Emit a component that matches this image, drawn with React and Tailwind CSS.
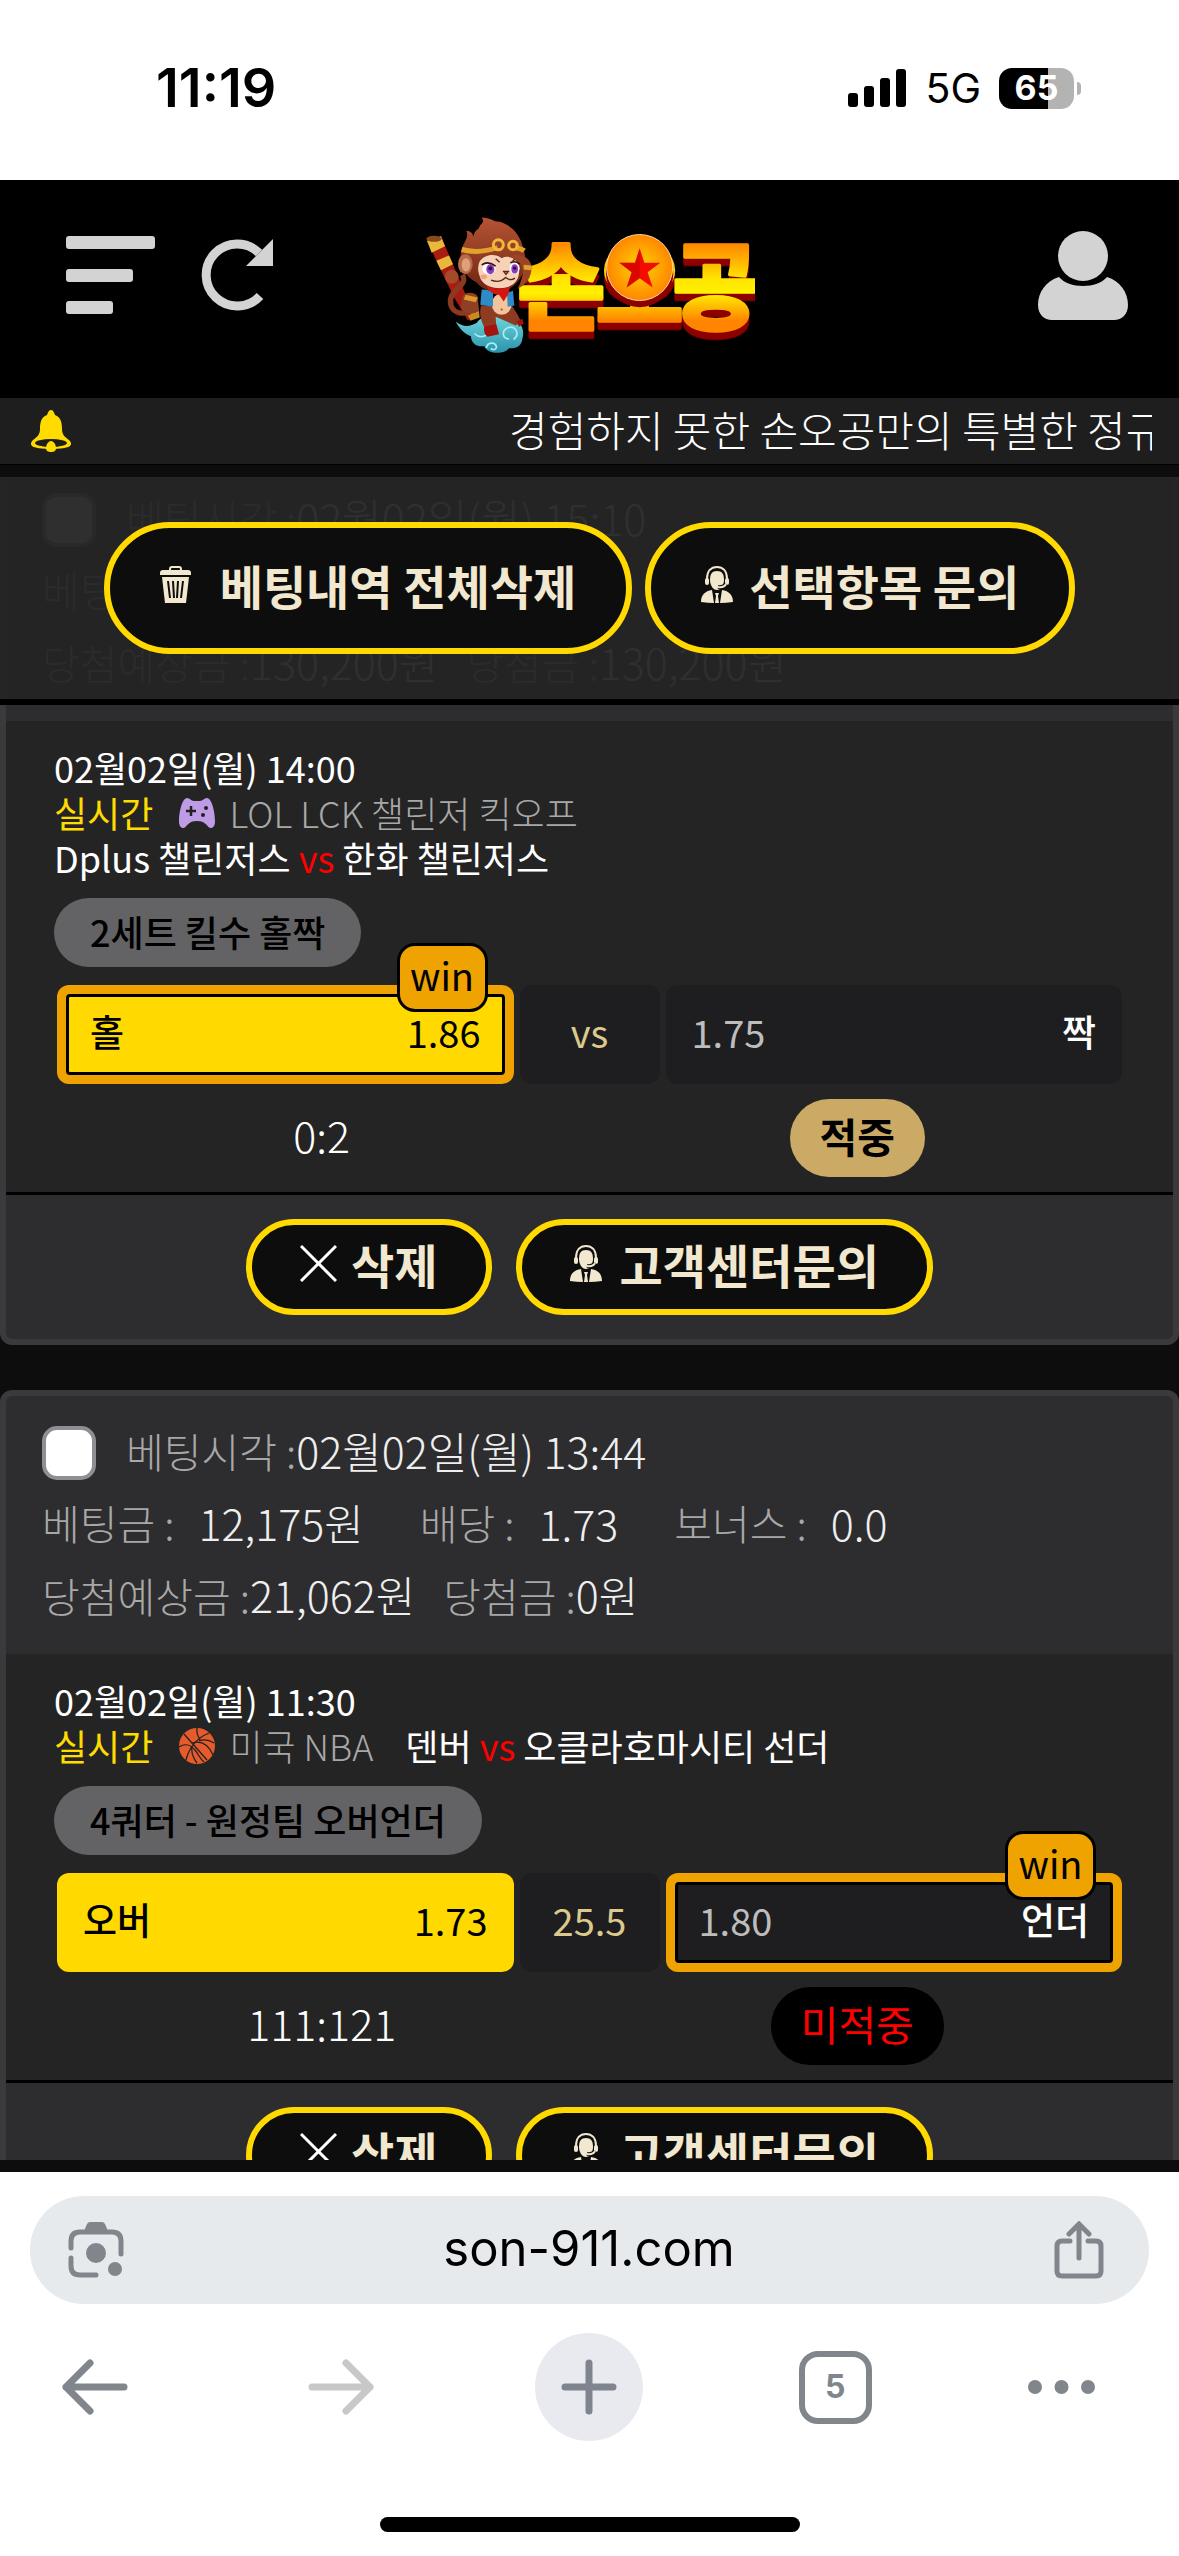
import React, { useState } from "react";

const krFont = "font-['Noto_Sans_CJK_KR','Noto_Sans_CJK_SC',sans-serif]";
const uiFont = "font-[Inter,'Liberation_Sans',sans-serif]";

const bets = [
  {
    id: "bet-1",
    time: "02월02일(월) 15:10",
    stake: "70,000원",
    odds: "1.86",
    bonus: "0.0",
    expected: "130,200원",
    payout: "130,200원",
    matchTime: "02월02일(월) 14:00",
    sport: "esports",
    league: "LOL LCK 챌린저 킥오프",
    home: "Dplus 챌린저스",
    away: "한화 챌린저스",
    teamsOnNewLine: true,
    market: "2세트 킬수 홀짝",
    left: { name: "홀", odds: "1.86" },
    middle: "vs",
    right: { name: "짝", odds: "1.75" },
    winner: "left",
    score: "0:2",
    hit: true,
  },
  {
    id: "bet-2",
    time: "02월02일(월) 13:44",
    stake: "12,175원",
    odds: "1.73",
    bonus: "0.0",
    expected: "21,062원",
    payout: "0원",
    matchTime: "02월02일(월) 11:30",
    sport: "basketball",
    league: "미국 NBA",
    home: "덴버",
    away: "오클라호마시티 선더",
    teamsOnNewLine: false,
    market: "4쿼터 - 원정팀 오버언더",
    left: { name: "오버", odds: "1.73" },
    middle: "25.5",
    right: { name: "언더", odds: "1.80" },
    winner: "right",
    score: "111:121",
    hit: false,
  },
];

/* ---------- icons ---------- */

const MenuIcon = () => (
  <svg viewBox="0 0 89 78" className="w-[89px] h-[78px]" fill="#d3d3d3">
    <rect width="89" height="13" rx="3" />
    <rect y="33" width="67" height="13" rx="3" />
    <rect y="65" width="47" height="13" rx="3" />
  </svg>
);

const RefreshIcon = () => (
  <svg viewBox="0 0 72 72" className="w-[72px] h-[72px]">
    <path d="M58 14A31 31 0 1 0 59 57" fill="none" stroke="#d3d3d3" strokeWidth="9" />
    <path d="M72 0v27H45z" fill="#d3d3d3" />
  </svg>
);

const UserIcon = () => (
  <svg viewBox="0 0 90 89" className="w-[90px] h-[89px]" fill="#d3d3d3">
    <circle cx="45" cy="25" r="25" />
    <path d="M21 46c5 6 14 9 24 9s19-3 24-9c13 4 21 15 21 28 0 9-6 15-14 15H14C6 89 0 83 0 74c0-13 8-24 21-28z" />
  </svg>
);

const BellIcon = () => (
  <svg viewBox="0 0 42 42" className="w-[42px] h-[42px] shrink-0">
    <path
      d="M21 0c2 0 3 2 4 5 6 2 7 8 7 14 0 6 3 8 7 11 2 2 3 4 1 6-4 4-34 4-38 0-2-2-1-4 1-6 4-3 7-5 7-11 0-6 1-12 7-14 1-3 2-5 4-5z"
      fill="#ffdb00"
    />
    <ellipse cx="21" cy="33" rx="16" ry="4" fill="#1e1e1e" />
    <path d="M21 31c3 0 5 4 5 7s-2 4-5 4-5-1-5-4 2-7 5-7z" fill="#ffdb00" />
  </svg>
);

const TrashIcon = () => (
  <svg viewBox="0 0 31 37" className="w-[31px] h-[37px]">
    <path d="M10 6V3q0-2 2-2h7q2 0 2 2v3" fill="none" stroke="#f1e8cf" strokeWidth="2" />
    <path d="M3 4h25q3 0 3 3v2H0V7q0-3 3-3z" fill="#f1e8cf" />
    <path d="M2 11h27l-3 26H5z" fill="#f1e8cf" />
    <path d="M8 15l2 17M13 15l1 17M18 15l-1 17M23 15l-2 17" stroke="#0d0d0d" strokeWidth="2" />
  </svg>
);

const AgentIcon = () => (
  <svg viewBox="0 0 32 37" className="w-[32px] h-[37px]">
    <path d="M16 5c5 0 7 3 7 9 0 5-3 10-7 10s-7-5-7-10c0-6 2-9 7-9z" fill="#f1e8cf" />
    <path d="M6 13C6 5 10 1 16 1s10 4 10 12" fill="none" stroke="#f1e8cf" strokeWidth="2" />
    <rect x="4" y="12" width="4" height="7" rx="2" fill="#f1e8cf" />
    <rect x="24" y="12" width="4" height="7" rx="2" fill="#f1e8cf" />
    <path d="M25 18q-2 4-8 3" fill="none" stroke="#0d0d0d" strokeWidth="4" />
    <path d="M25 18q-2 4-8 3" fill="none" stroke="#f1e8cf" strokeWidth="2" />
    <path d="M11 24c-7 1-11 5-11 12q7 1 13 1zM21 24c7 1 11 5 11 12q-7 1-13 1z" fill="#f1e8cf" />
    <path d="M14 27h4l-1 3 1 7h-4l1-7z" fill="#f1e8cf" />
  </svg>
);

const CloseIcon = () => (
  <svg viewBox="0 0 37 37" className="w-[37px] h-[37px]">
    <path d="M1 1l35 35M36 1L1 36" stroke="#ffffff" strokeWidth="3" />
  </svg>
);

const SportIcon = ({ sport }) => {
  if (sport === "esports") {
    return (
      <svg viewBox="0 0 36 30" className="w-[36px] h-[30px]">
        <path
          d="M8 0c3 0 4 3 7 3h6c3 0 4-3 7-3 5 0 8 15 8 23 0 5-2 7-4 7-4 0-4-7-14-7S8 30 4 30c-2 0-4-2-4-7C0 15 3 0 8 0z"
          fill="#bf9be5"
        />
        <path d="M12 8v10M7 13h10" stroke="#222" strokeWidth="2.500" />
        <circle cx="27" cy="10" r="2" fill="#222" />
        <circle cx="24" cy="17" r="2" fill="#222" />
      </svg>
    );
  }
  return (
    <svg viewBox="0 0 36 36" className="w-[36px] h-[36px]">
      <circle cx="18" cy="18" r="18" fill="#e55b2b" />
      <g fill="none" stroke="#222222" strokeWidth="1.300">
        <path d="M5 6l23 26M30 5C18 10 10 20 7 32M18 0c-1 6 1 8 3 12M0 19c6-4 12-2 16 3s5 9 9 12M13 15c10-3 17 3 21 12M20 13c5-2 10-1 15 2M13 18c-1 7 1 12 5 17" />
      </g>
    </svg>
  );
};

const Logo = () => (
  <svg viewBox="78 50 990 416" className="w-[330px] h-[139px]">
    <defs>
      <linearGradient id="gold" x1="0" y1="0" x2="0" y2="1">
        <stop offset="0.25" stopColor="#ff8a00" />
        <stop offset="0.5" stopColor="#ffe600" />
        <stop offset="0.6" stopColor="#fff000" />
        <stop offset="0.8" stopColor="#ff8400" />
      </linearGradient>
      <radialGradient id="disc">
        <stop offset="0" stopColor="#ffd500" />
        <stop offset="1" stopColor="#ff8600" />
      </radialGradient>
      <linearGradient id="hair" x1="0" y1="0" x2="0" y2="1">
        <stop offset="0" stopColor="#b55433" />
        <stop offset="1" stopColor="#6e2413" />
      </linearGradient>
      <linearGradient id="cloud" x1="0" y1="0" x2="0" y2="1">
        <stop offset="0" stopColor="#6fd7de" />
        <stop offset="1" stopColor="#2a93ab" />
      </linearGradient>
    </defs>

    {/* wordmark with a dark red edge below */}
    <text
      x="487 722 952"
      y="366"
      fontSize="286"
      textAnchor="middle"
      strokeLinejoin="round"
      fill="url(#gold)"
      stroke="url(#gold)"
      strokeWidth="10"
      className="font-['Noto_Sans_CJK_KR',sans-serif] font-black drop-shadow-[0_22px_0_#8d0000]"
    >
      손오공
    </text>
    <circle cx="722" cy="222" r="101" fill="#8d0000" />
    <circle cx="722" cy="204" r="99" fill="url(#disc)" stroke="#ffd9a0" strokeWidth="3" />
    <path
      d="M722 146l14 44h48l-38 28 15 46-39-28-39 28 15-46-37-28h47z"
      fill="#f20d00"
    />
    <path d="M722 146v90l-39 28 15-46-37-28h47z" fill="#c40000" opacity="0.500" />

    {/* staff */}
    <path d="M84 124l42-14 76 180 34 60-30 12-42-70z" fill="#a81c12" />
    <path d="M84 124l42-14 12 30-40 20zM112 184l38-16 12 26-36 18z" fill="#eab93c" />
    <ellipse cx="105" cy="118" rx="23" ry="9" fill="#8a4a1c" />
    <path d="M206 346l34-12 2 20-28 10z" fill="#c98a22" />
    {/* tail */}
    <path d="M190 226c22 34-48 44-34 92 8 24 34 26 58 20" fill="none" stroke="#8b3a20" strokeWidth="16" />
    <circle cx="158" cy="232" r="21" fill="#a4492a" />
    {/* cloud */}
    <path
      d="M170 366c20 16 40 18 64 4 10-22 60-30 90-18 36 2 56 34 46 66-2 26-24 30-40 28-14 20-66 18-74-6-26 4-40-12-40-30-20-6-34-22-46-44z"
      fill="url(#cloud)"
    />
    <path
      d="M344 420c20-16 6-42-16-36-22 8-18 36 2 34M262 446c4-20 26-18 30-6 2 10-12 14-16 6M226 402c14 14 30 10 40 2"
      fill="none"
      stroke="#a6eef0"
      strokeWidth="5"
    />
    {/* body */}
    <path d="M246 318c-8 34 4 56 18 78l28-8-2-36 60 26 16-12c-10-22-16-30-28-48z" fill="#8d3c22" />
    <path d="M256 380l36-6 8 30-34 8c-12-8-12-20-10-32zM352 366l18-8 4 14-14 10z" fill="#a3130f" />
    <ellipse cx="308" cy="314" rx="30" ry="32" fill="#f3c49b" />
    <path d="M248 270l34 2 0 50-38-6zM324 280l18-6 4 44-20 4z" fill="#2d8bc8" />
    <path d="M190 290c10-14 40-14 46 2l4 40c-16 16-46 12-54-8z" fill="#8f3f24" />
    <path d="M200 286l36 8-6 14-36-8z" fill="#d99a2b" />
    <circle cx="308" cy="330" r="3" fill="#8d4b2c" />
    {/* head */}
    <path
      d="M186 160c4-30 26-44 16-66 16 2 18 8 22 18 0-10 4-18 16-26 2-14 20-14 8-32 26 0 38 14 50 12 34 6 66 38 74 78 14 40 10 90-40 124-40 18-80 6-100-20-40-18-52-60-46-88z"
      fill="url(#hair)"
    />
    <ellipse cx="199" cy="194" rx="22" ry="30" fill="#b96a4a" />
    <ellipse cx="201" cy="196" rx="13" ry="20" fill="#e0a07c" />
    <path
      d="M242 186c14-22 46-26 66-10 18-10 46 0 50 22 8 30-4 58-36 66-34 8-74-6-80-34-6-14-6-30 0-44z"
      fill="#f6d3b8"
    />
    <ellipse cx="270" cy="208" rx="20" ry="17" fill="#ffffff" />
    <ellipse cx="347" cy="206" rx="15" ry="17" fill="#ffffff" />
    <ellipse cx="274" cy="209" rx="12" ry="15" fill="#8a3cc4" />
    <ellipse cx="347" cy="208" rx="10" ry="14" fill="#8a3cc4" />
    <circle cx="274" cy="207" r="6" fill="#2a1038" />
    <circle cx="347" cy="206" r="5" fill="#2a1038" />
    <path d="M248 196q20-14 42 4M334 190q16-8 28 4" fill="none" stroke="#35120c" strokeWidth="5" />
    <path d="M314 216l14 0-7 9zM276 242q26 10 44-8 14 12 28 2" fill="none" stroke="#5a2517" strokeWidth="4" />
    <path d="M290 178l12 10M350 176l-10 10" stroke="#5a2517" strokeWidth="4" />
    <ellipse cx="254" cy="232" rx="10" ry="7" fill="#f2a18a" />
    {/* headband */}
    <path d="M188 150q50 14 108-6M348 144q20 4 28 10" fill="none" stroke="#e2a12c" strokeWidth="15" />
    <circle cx="298" cy="136" r="15" fill="none" stroke="#f0b93c" strokeWidth="9" />
    <circle cx="342" cy="138" r="13" fill="none" stroke="#f0b93c" strokeWidth="9" />
    {/* raised hand */}
    <path d="M336 168c20-8 52 2 60 26 6 32-10 60-40 74 12-26 22-52 10-72-8-14-22-16-30-28z" fill="#9c4426" />
    <path d="M374 196l24 2-2 14-22-2z" fill="#e2a12c" />
    {/* scarf */}
    <path d="M262 258c20 12 46 12 70 4l-2 18-16 26-14-20c-14 0-30-8-38-28z" fill="#d3170f" />
  </svg>
);

const SignalIcon = () => (
  <svg viewBox="0 0 59 38" className="w-[59px] h-[38px]">
    <rect y="24" width="10" height="14" rx="3" />
    <rect x="16" y="17" width="10" height="21" rx="3" />
    <rect x="32" y="9" width="10" height="29" rx="3" />
    <rect x="48" width="10" height="38" rx="3" />
  </svg>
);

const LensIcon = () => (
  <svg viewBox="0 0 56 56" className="w-[56px] h-[56px]" fill="none" stroke="#80868b" strokeWidth="5">
    <path d="M3 26V19q0-9 9-9h32q9 0 9 9v13M3 36v8q0 9 9 9h16" strokeLinecap="round" />
    <path d="M16 9l3-7q1-2 3-2h12q2 0 3 2l3 7z" fill="#80868b" stroke="none" />
    <circle cx="28" cy="31" r="10" fill="#80868b" stroke="none" />
    <circle cx="47" cy="47" r="7" fill="#80868b" stroke="none" />
  </svg>
);

const ShareIcon = () => (
  <svg viewBox="0 0 50 58" className="w-[50px] h-[58px]" fill="none" stroke="#80868b" strokeWidth="5" strokeLinecap="round">
    <path d="M16 20H8q-5 0-5 5v25q0 5 5 5h34q5 0 5-5V25q0-5-5-5h-8" />
    <path d="M25 37V4M15 13L25 3l10 10" />
  </svg>
);

const ArrowIcon = ({ flip, color }) => (
  <svg viewBox="0 0 66 56" className="w-[66px] h-[56px]" fill="none" stroke={color} strokeWidth="7" strokeLinecap="round" strokeLinejoin="round">
    {flip ? <path d="M4 28h58M38 4l24 24-24 24" /> : <path d="M62 28H4M28 4L4 28l24 24" />}
  </svg>
);

/* ---------- pieces ---------- */

const StatusBar = () => (
  <div className={`${uiFont} flex h-[180px] shrink-0 items-center justify-between bg-white pb-1 pl-[156px] pr-[98px] text-black`}>
    <span className="text-[54px] font-semibold leading-none">11:19</span>
    <div className="flex items-center gap-[18px]">
      <SignalIcon />
      <span className="text-[41px] leading-none">5G</span>
      <div className="flex items-center gap-[3px]">
        <div className="flex h-[41px] w-[75px] items-center justify-center rounded-[13px] bg-linear-to-r from-black from-65% to-[#b3b3b3] to-65%">
          <span className="text-[34px] font-bold leading-none text-white">65</span>
        </div>
        <div className="h-[13px] w-[4px] rounded-r-full bg-[#b3b3b3]" />
      </div>
    </div>
  </div>
);

const PillButton = ({ children, className }) => (
  <button
    type="button"
    className={`flex items-center rounded-full border-6 border-[#ffd900] bg-[#0d0d0d] text-[47px] font-bold leading-none text-[#f1e8cf] ${className}`}
  >
    {children}
  </button>
);

const WinBadge = () => (
  <span className="absolute -top-[42px] right-[26px] flex h-[69px] w-[91px] items-center justify-center rounded-[18px] border-3 border-black bg-[#eea300] pb-1.5 text-[38px] leading-none text-black">
    win
  </span>
);

const OddsCell = ({ win, picked, children }) => (
  <div
    className={`relative rounded-xl ${win ? "bg-[#eea300] p-[9px]" : ""} ${
      picked ? "text-black" : "text-white"
    }`}
  >
    <div
      className={`flex h-full items-center justify-between pb-1.5 text-[38px] leading-none ${
        win ? "rounded-sm border-3 border-black px-[21px]" : "rounded-xl px-[26px]"
      } ${picked ? "bg-[#ffd900]" : "bg-[#1e1e20]"}`}
    >
      {children}
    </div>
    {win && <WinBadge />}
  </div>
);

const TeamName = ({ children }) => <span className="text-[37px] font-medium">{children}</span>;

const Label = ({ children }) => <span className="text-[41px] text-[#a8a8a8]">{children}</span>;

const BetCard = ({ bet }) => {
  const [checked, setChecked] = useState(false);

  const teams = (
    <>
      {bet.home} <span className="text-[#ff0000]">vs</span> {bet.away}
    </>
  );

  return (
    <article className="shrink-0 overflow-hidden rounded-xl border-6 border-[#3a3a3c] bg-[#2d2d2f]">
      {/* Bet summary */}
      <div className="px-9 pb-6 pt-[18px] text-[43px] font-light leading-[72px] text-[#efefef]">
        <label className="flex h-[72px] items-center">
          <input
            type="checkbox"
            checked={checked}
            onChange={(e) => setChecked(e.target.checked)}
            className="mr-[30px] mt-[6px] size-[54px] appearance-none rounded-[15px] border-4 border-[#8e8e93] bg-white checked:bg-[#ffd900]"
          />
          <Label>베팅시각 :</Label>
          {bet.time}
        </label>
        <div className="flex h-[72px] gap-14">
          <span className="flex gap-6"><Label>베팅금 :</Label>{bet.stake}</span>
          <span className="flex gap-6"><Label>배당 :</Label>{bet.odds}</span>
          <span className="flex gap-6"><Label>보너스 :</Label>{bet.bonus}</span>
        </div>
        <div className="flex h-[72px] gap-7">
          <span><Label>당첨예상금 :</Label>{bet.expected}</span>
          <span><Label>당첨금 :</Label>{bet.payout}</span>
        </div>
      </div>

      {/* Match */}
      <div className="border-b-3 border-black bg-[#242424] px-12 pb-[15px] pt-6 text-white">
        <div className="text-[36px] leading-[45px]">
          <p>{bet.matchTime}</p>
          <p className="flex h-[45px] items-center">
            <span className="mr-[26px] text-[#ffdb00]">실시간</span>
            <SportIcon sport={bet.sport} />
            <span className="ml-[14px] font-light text-[#a8a8a8]">{bet.league}</span>
            {!bet.teamsOnNewLine && <span className="ml-8">{teams}</span>}
          </p>
          {bet.teamsOnNewLine && <p>{teams}</p>}
        </div>

        <span className="mt-[18px] inline-flex h-[69px] items-center rounded-full bg-[#636365] px-9 pb-1 align-top text-[36px] font-medium leading-none text-black">
          {bet.market}
        </span>

        <div className="mx-[3px] mt-[18px] grid h-[99px] grid-cols-[1fr_140px_1fr] gap-[6px]">
          <OddsCell picked win={bet.winner === "left"}>
            <TeamName>{bet.left.name}</TeamName>
            <span>{bet.left.odds}</span>
          </OddsCell>
          <div className="flex items-center justify-center rounded-xl bg-[#1e1e20] pb-1.5 text-[38px] leading-none text-[#dcc98c]">
            {bet.middle}
          </div>
          <OddsCell win={bet.winner === "right"}>
            <span className="text-[#bdbdbd]">{bet.right.odds}</span>
            <TeamName>{bet.right.name}</TeamName>
          </OddsCell>
        </div>

        <div className="mt-[15px] grid grid-cols-2 items-center justify-items-center leading-none">
          <span className="pb-2 text-[43px] font-light">{bet.score}</span>
          <span
            className={`flex h-[78px] items-center rounded-full px-[30px] pb-1.5 text-[41px] ${
              bet.hit ? "bg-[#cbaa65] font-bold text-black" : "bg-black text-[#ff0000]"
            }`}
          >
            {bet.hit ? "적중" : "미적중"}
          </span>
        </div>
      </div>

      {/* Actions */}
      <div className="flex justify-center gap-6 py-6">
        <PillButton className="h-24 gap-[14px] px-12 pb-2">
          <CloseIcon />
          삭제
        </PillButton>
        <PillButton className="h-24 gap-[18px] px-12 pb-2">
          <AgentIcon />
          고객센터문의
        </PillButton>
      </div>
    </article>
  );
};

const BrowserBar = () => (
  <div className={`${uiFont} shrink-0 bg-white px-[30px] pb-6 pt-6`}>
    <div className="flex h-[108px] items-center justify-between rounded-full bg-[#e6eaed] pl-[38px] pr-[45px]">
      <button type="button" aria-label="렌즈"><LensIcon /></button>
      <a href="#" className="pb-1 text-[49px] leading-none text-black">son-911.com</a>
      <button type="button" aria-label="공유"><ShareIcon /></button>
    </div>
    <nav className="mt-[29px] flex items-center justify-between pl-8 pr-[54px]">
      <button type="button" aria-label="뒤로"><ArrowIcon color="#80868b" /></button>
      <button type="button" aria-label="앞으로" className="ml-6"><ArrowIcon flip color="#c8c8c8" /></button>
      <button type="button" aria-label="새 탭" className="ml-1 flex size-[108px] items-center justify-center rounded-full bg-[#e9eaef]">
        <svg viewBox="0 0 56 56" className="w-[56px] h-[56px]" stroke="#80848e" strokeWidth="7" strokeLinecap="round">
          <path d="M28 4v48M4 28h48" />
        </svg>
      </button>
      <button type="button" aria-label="탭 목록" className="flex size-[73px] items-center justify-center rounded-[19px] border-6 border-[#80868b] text-[32px] font-bold leading-none text-[#80868b]">
        5
      </button>
      <button type="button" aria-label="더보기">
        <svg viewBox="0 0 67 14" className="w-[67px] h-[14px]" fill="#80868b">
          <circle cx="7" cy="7" r="7" />
          <circle cx="33.500" cy="7" r="7" />
          <circle cx="60" cy="7" r="7" />
        </svg>
      </button>
    </nav>
    <div className="mx-auto mt-[76px] h-[15px] w-[420px] rounded-full bg-black" />
  </div>
);

const App = () => {
  return (
    <div className={`${krFont} flex h-screen flex-col overflow-hidden bg-[#0d0d0d]`}>
      <StatusBar />

      {/* Site header */}
      <header className="flex h-[218px] shrink-0 items-center bg-black px-[51px] pb-7">
        <div className="flex flex-1 items-center gap-[46px]">
          <button type="button" aria-label="메뉴" className="ml-[15px]"><MenuIcon /></button>
          <button type="button" aria-label="새로고침"><RefreshIcon /></button>
        </div>
        <a href="#" className="mt-5"><Logo /></a>
        <div className="flex flex-1 justify-end">
          <button type="button" aria-label="내 정보"><UserIcon /></button>
        </div>
      </header>

      {/* Notice ticker */}
      <div className="flex h-[67px] shrink-0 items-center border-b border-black bg-[#1e1e1e] pl-[30px] pr-[27px]">
        <BellIcon />
        <div className="ml-[437px] min-w-0 flex-1 overflow-hidden whitespace-nowrap pb-1 text-[42px] font-light leading-[62px] text-white">
          경험하지 못한 손오공만의 특별한 정규
        </div>
      </div>

      <main className="relative min-h-0 flex-1 overflow-hidden">
        <div className="-mt-2 flex flex-col gap-[45px]">
          {bets.map((bet) => (
            <BetCard key={bet.id} bet={bet} />
          ))}
        </div>

        {/* Fixed toolbar over the list */}
        <div className="absolute inset-x-0 top-0 flex justify-center gap-[13px] border-b-6 border-t-12 border-b-black border-t-[#0d0d0d] bg-[#242424]/95 pb-[45px] pt-[45px]">
          <PillButton className="h-[132px] gap-[29px] px-[50px] pb-2">
            <TrashIcon />
            베팅내역 전체삭제
          </PillButton>
          <PillButton className="h-[132px] gap-4 px-[50px] pb-2">
            <AgentIcon />
            선택항목 문의
          </PillButton>
        </div>
      </main>
      <div className="h-3 shrink-0 bg-[#0d0d0d]" />

      <BrowserBar />
    </div>
  );
};

export default App;
